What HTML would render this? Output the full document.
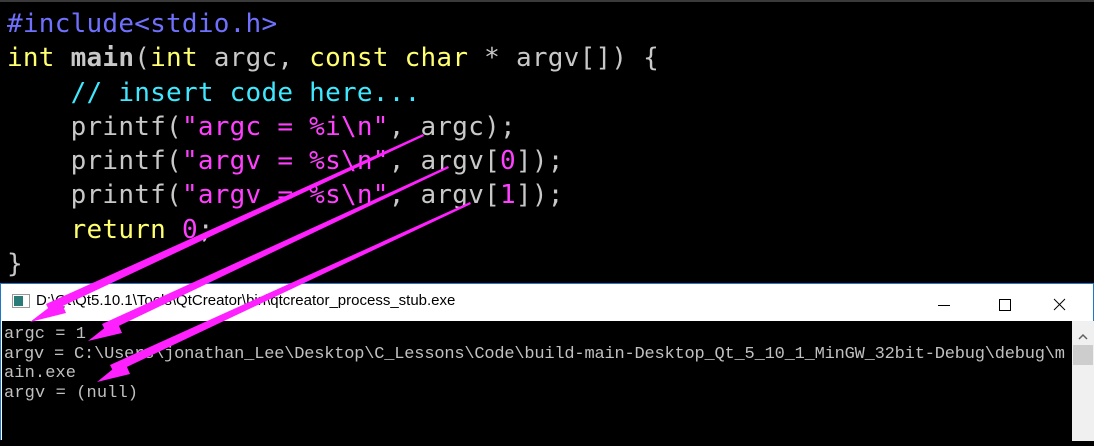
<!DOCTYPE html>
<html><head><meta charset="utf-8"><style>
body{margin:0;width:1094px;height:440px;overflow:hidden;background:#000;position:relative;font-family:"Liberation Mono",monospace}
#top{position:absolute;left:0;top:0;width:1094px;height:283px;background:#000;border-top:2px solid #3a3a3a;box-sizing:border-box}
#code{position:absolute;left:7px;top:5px;font-size:26px;line-height:34.3px;color:#c8c8c8;white-space:pre;font-family:"DejaVu Sans Mono","Liberation Mono",monospace;letter-spacing:0.25px}
.i{color:#7070ff}.k{color:#ffff70}.s{color:#ff40ff}.c{color:#40e8ff}.b{font-weight:bold}
#win{position:absolute;left:0;top:283px;width:1094px;height:157px;border:1px solid #1e78c8;box-sizing:border-box;border-bottom:none;background:#fff}
#title{position:absolute;left:35px;top:8px;font:15px "Liberation Sans",sans-serif;color:#000}
#con{position:absolute;left:1px;top:37px;width:1070px;height:120px;background:#000}
#sb{position:absolute;left:1071px;top:37px;width:22px;height:120px;background:#f0f0f0}
</style></head><body>
<div id="top"><div id="code"><span class="i">#include&lt;stdio.h&gt;</span>
<span class="k">int</span> <span class="b">main</span>(<span class="k">int</span> argc, <span class="k">const char</span> * argv[]) {
    <span class="c">// insert code here...</span>
    printf(<span class="s">"argc = %i\n"</span>, argc);
    printf(<span class="s">"argv = %s\n"</span>, argv[<span class="s">0</span>]);
    printf(<span class="s">"argv = %s\n"</span>, argv[<span class="s">1</span>]);
    <span class="k">return</span> <span class="s">0</span>;
}</div></div>
<div id="win">
<svg style="position:absolute;left:11px;top:10px" width="18" height="14"><rect x="0.5" y="0.5" width="17" height="13" fill="#fff" stroke="#999"/><rect x="2" y="2" width="9" height="10" fill="#2a7a7a"/></svg>
<div id="title">D:\Qt\Qt5.10.1\Tools\QtCreator\bin\qtcreator_process_stub.exe</div>
<svg style="position:absolute;left:930px;top:10px" width="150" height="20" stroke="#000" fill="none" stroke-width="1"><line x1="7" y1="11.5" x2="19" y2="11.5"/><rect x="68.5" y="5.5" width="11" height="11"/><line x1="123" y1="5" x2="134" y2="16"/><line x1="134" y1="5" x2="123" y2="16"/></svg>
<div id="con"><svg width="1070" height="120" font-family="Liberation Mono, monospace" font-size="17" fill="#c0c0c0">
<text x="2" y="17" textLength="82" lengthAdjust="spacing">argc = 1</text>
<text x="2" y="37" textLength="1061" lengthAdjust="spacing">argv = C:\Users\jonathan_Lee\Desktop\C_Lessons\Code\build-main-Desktop_Qt_5_10_1_MinGW_32bit-Debug\debug\m</text>
<text x="2" y="56" textLength="72" lengthAdjust="spacing">ain.exe</text>
<text x="2" y="76" textLength="134" lengthAdjust="spacing">argv = (null)</text>
</svg></div>
<div id="sb"><svg width="22" height="120"><path d="M7 18 L11 14 L15 18" stroke="#606060" fill="none" stroke-width="1.5"/><rect x="1" y="24" width="20" height="20" fill="#cdcdcd"/></svg></div>
</div>
<svg style="position:absolute;left:0;top:0" width="1094" height="440">
<g fill="#ff20ff">
<polygon points="423,134 424,136 50,312 46,304"/><polygon points="30,322 60,299 66,313"/>
<polygon points="448,166 449,168 106,332 102,324"/><polygon points="88,341 116,319 122,333"/>
<polygon points="470,202 471,204 114,373 110,365"/><polygon points="97,382 124,360 130,374"/>
</g></svg>
</body></html>
